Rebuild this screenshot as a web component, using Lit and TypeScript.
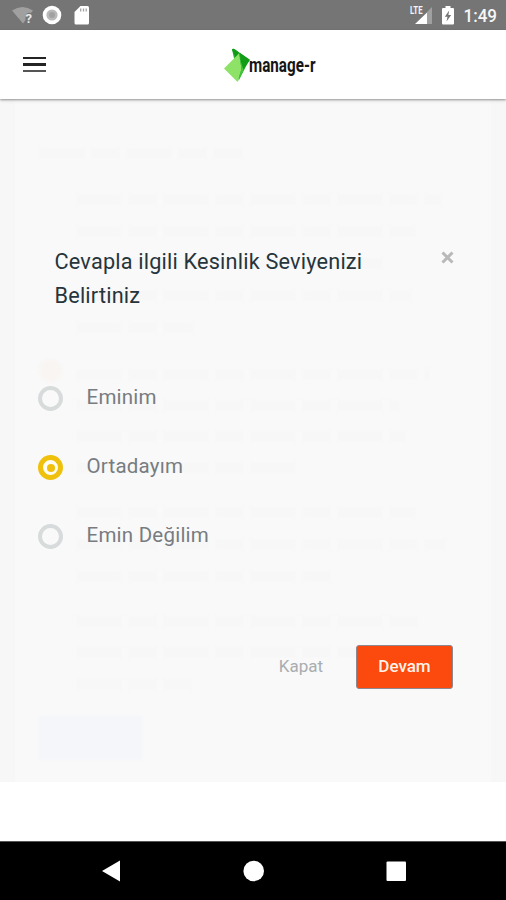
import { LitElement, html, css, svg } from "lit";
import { customElement, property, state } from "lit/decorators.js";
import { classMap } from "lit/directives/class-map.js";
import { styleMap } from "lit/directives/style-map.js";

@customElement("status-bar")
class StatusBar extends LitElement {
  static styles = css`
    :host { display: flex; height: 30px; background: #757575; }
    svg { display: block; }
    .time { font: 500 17.5px/30px Roboto, sans-serif; fill: #f6f6f6; }
    .lte { font: 700 10px Roboto, sans-serif; fill: #f4f4f4; }
    .query { font: 700 13px Roboto, sans-serif; fill: #e8e8e8; }
  `;
  render() {
    return html`
      <svg width="506" height="30" viewBox="0 0 506 30">
        <path d="M12 10.5Q22.5 3.5 33 10.5L31 13Q26 12 25.5 17V20L23 23.5Z" fill="#a0a0a0" />
        <text class="query" x="25.5" y="22.5">?</text>
        <circle cx="52" cy="15" r="9.3" fill="#fff" />
        <circle cx="52" cy="15" r="5.6" fill="#b9b9b9" />
        <circle cx="52" cy="15" r="3" fill="#a2a2a2" />
        <path d="M80.5 6H87.5Q89 6 89 7.500V23Q89 24.500 87.500 24.500H76Q74.500 24.500 74.500 23V12Z" fill="#fff" />
        <path d="M80.700 8.500V11.500M83.500 8.500V11.500M86.200 8.500V11.500" stroke="#a4a4a4" stroke-width="1.300" />
        <path d="M432 7V24H427V12Z" fill="#a0a0a0" />
        <path d="M427 12.500V24H415Z" fill="#fff" />
        <text class="lte" x="410" y="14" textLength="12.500" lengthAdjust="spacingAndGlyphs">LTE</text>
        <path d="M445.500 6H450.500V8H453Q454 8 454 9V23.500Q454 24.500 453 24.500H443Q442 24.500 442 23.500V9Q442 8 443 8H445.500Z" fill="#fff" />
        <path d="M449.200 10.500L444.800 16.800H447.500L446.500 21.500L451.200 15H448.400Z" fill="#757575" />
        <text class="time" x="463.500" y="22" textLength="33.500" lengthAdjust="spacingAndGlyphs">1:49</text>
      </svg>
    `;
  }
}

@customElement("app-header")
class AppHeader extends LitElement {
  static styles = css`
    :host {
      display: grid; grid-template-columns: 222px 1fr; align-items: center;
      height: 69px; background: #fff; position: relative; z-index: 1;
      box-shadow: 0 1px 2px rgba(0, 0, 0, .36), 0 2px 4px rgba(0, 0, 0, .08);
    }
    .menu { display: flex; flex-direction: column; gap: 4px; width: 23px; margin-left: 23px; }
    .bar { height: 2.600px; background: #242424; }
    .bar.soft { background: #555; }
    .logo { display: block; }
    .name { font: 700 20.500px "Roboto", sans-serif; fill: #151515; }
  `;
  render() {
    return html`
      <div class="menu"><div class="bar"></div><div class="bar"></div><div class="bar soft"></div></div>
      <svg class="logo" width="160" height="50" viewBox="0 0 160 50">
        <path d="M10 9.500Q11 8 13 9.500L27.500 19.500L17 40Z" fill="#22ad26" />
        <path d="M10 9.500Q11 8 13 9.500L17 12.500L13.500 17.500Z" fill="#149a1a" />
        <path d="M18 13L28 20L20 31Z" fill="#129c17" />
        <path d="M17 13.500L2 28.500L15.500 42L19.500 29Z" fill="#8fe268" />
        <path d="M15.500 42L19.500 29L18 19L21.500 30Z" fill="#45c63c" />
        <text class="name" x="27" y="32" textLength="66.500" lengthAdjust="spacingAndGlyphs">manage-r</text>
      </svg>
    `;
  }
}

@customElement("radio-option")
class RadioOption extends LitElement {
  @property() label = "";
  @property({ type: Boolean }) checked = false;
  static styles = css`
    :host { display: flex; height: 69px; align-items: flex-start; }
    .ring {
      box-sizing: border-box; width: 25px; height: 25px; margin: 14px 23.500px 0 0; border-radius: 50%;
      border: 4.500px solid #d8dbdb; display: grid; place-items: center;
    }
    .ring.on { border: 5px solid #efc10c; background: #fffdf2; }
    .dot { width: 8px; height: 8px; border-radius: 50%; background: #efc10c; }
    .label { font: 400 20.500px/24px Roboto, sans-serif; color: #777c81; margin-top: 13px; white-space: nowrap; letter-spacing: .23px; }
  `;
  render() {
    return html`
      <div class=${classMap({ ring: true, on: this.checked })}>${this.checked ? html`<div class="dot"></div>` : ""}</div>
      <div class="label">${this.label}</div>
    `;
  }
}

const BACKDROP_LINES = [
  { top: 49, left: 24, width: 204 },
  { top: 95, left: 61, width: 366 },
  { top: 127, left: 61, width: 340 },
  { top: 159, left: 61, width: 310 },
  { top: 191, left: 61, width: 336 },
  { top: 223, left: 61, width: 118 },
  { top: 270, left: 61, width: 354 },
  { top: 301, left: 61, width: 324 },
  { top: 332, left: 61, width: 330 },
  { top: 363, left: 61, width: 220 },
  { top: 408, left: 61, width: 340 },
  { top: 440, left: 61, width: 370 },
  { top: 472, left: 61, width: 260 },
  { top: 517, left: 61, width: 344 },
  { top: 548, left: 61, width: 320 },
  { top: 580, left: 61, width: 116 },
];

@customElement("app-root")
class AppRoot extends LitElement {
  @state() selected = 1;
  static styles = css`
    :host { display: flex; flex-direction: column; width: 506px; height: 900px; overflow: hidden; background: #fff; font-family: Roboto, sans-serif; }
    .stage { position: relative; height: 683px; background: #f7f7f7; padding: 0 15px; }
    .card { position: relative; height: 100%; background: #f9f9f9; }
    .line {
      position: absolute; height: 11px; filter: blur(1.500px);
      background: repeating-linear-gradient(90deg, #f7f7f7 0 46px, transparent 46px 52px, #f7f7f7 52px 81px, transparent 81px 87px);
    }
    .ghost-radio { position: absolute; left: 24px; top: 260px; width: 23px; height: 23px; border-radius: 50%; background: #f9f5f3; filter: blur(1px); }
    .ghost-button { position: absolute; left: 24px; top: 617px; width: 103px; height: 44px; background: #f4f6fa; filter: blur(1px); }
    .dialog { position: absolute; inset: 0; padding: 146px 50px 0 38px; }
    .top { display: flex; justify-content: space-between; align-items: flex-start; padding-left: 16.500px; height: 127px; }
    .title { margin: 0; font: 400 21.700px/34px Roboto, sans-serif; color: #26343b; letter-spacing: .19px; white-space: nowrap; }
    .close { display: block; margin: 6px 2.500px 0 0; }
    .options { display: flex; flex-direction: column; height: 273px; }
    .actions { display: flex; justify-content: flex-end; align-items: center; gap: 33px; padding-right: 3px; }
    .text-button { font: 400 17px/42px Roboto, sans-serif; color: #a9adb0; padding-bottom: 2px; }
    .primary { box-sizing: border-box; width: 97px; height: 44px; border: 1.500px solid #8c8791; border-radius: 3px; background: #fc490d; color: #fff2e8; font: 500 17px/41px Roboto, sans-serif; text-align: center; }
    .space { height: 59px; background: #fff; }
    .nav { height: 59px; background: #000; display: block; }
  `;
  render() {
    return html`
      <status-bar></status-bar>
      <app-header></app-header>
      <main class="stage">
        <div class="card">
          ${BACKDROP_LINES.map((l) => html`<div class="line" style=${styleMap({ top: `${l.top}px`, left: `${l.left}px`, width: `${l.width}px` })}></div>`)}
          <div class="ghost-radio"></div>
          <div class="ghost-button"></div>
        </div>
        <section class="dialog">
          <div class="top">
            <h1 class="title">Cevapla ilgili Kesinlik Seviyenizi<br />Belirtiniz</h1>
            <svg class="close" width="13" height="13" viewBox="0 0 13 13"><path d="M1.500 1.500L11.500 11.500M11.500 1.500L1.500 11.500" stroke="#b9b9b9" stroke-width="3" /></svg>
          </div>
          <div class="options">
            ${["Eminim", "Ortadayım", "Emin Değilim"].map((label, i) => html`
              <radio-option .label=${label} .checked=${i === this.selected} @click=${() => (this.selected = i)}></radio-option>`)}
          </div>
          <div class="actions">
            <span class="text-button">Kapat</span>
            <span class="primary">Devam</span>
          </div>
        </section>
      </main>
      <div class="space"></div>
      <svg class="nav" width="506" height="59" viewBox="0 0 506 59">
        ${svg`<path d="M0 .5H506" stroke="#555" />
        <path d="M102 30L120 19.500V40.500Z" fill="#fff" />
        <circle cx="253.700" cy="30" r="10.300" fill="#fff" />
        <rect x="386.500" y="20.500" width="19.500" height="19.500" rx="1" fill="#fff" />`}
      </svg>
    `;
  }
}
